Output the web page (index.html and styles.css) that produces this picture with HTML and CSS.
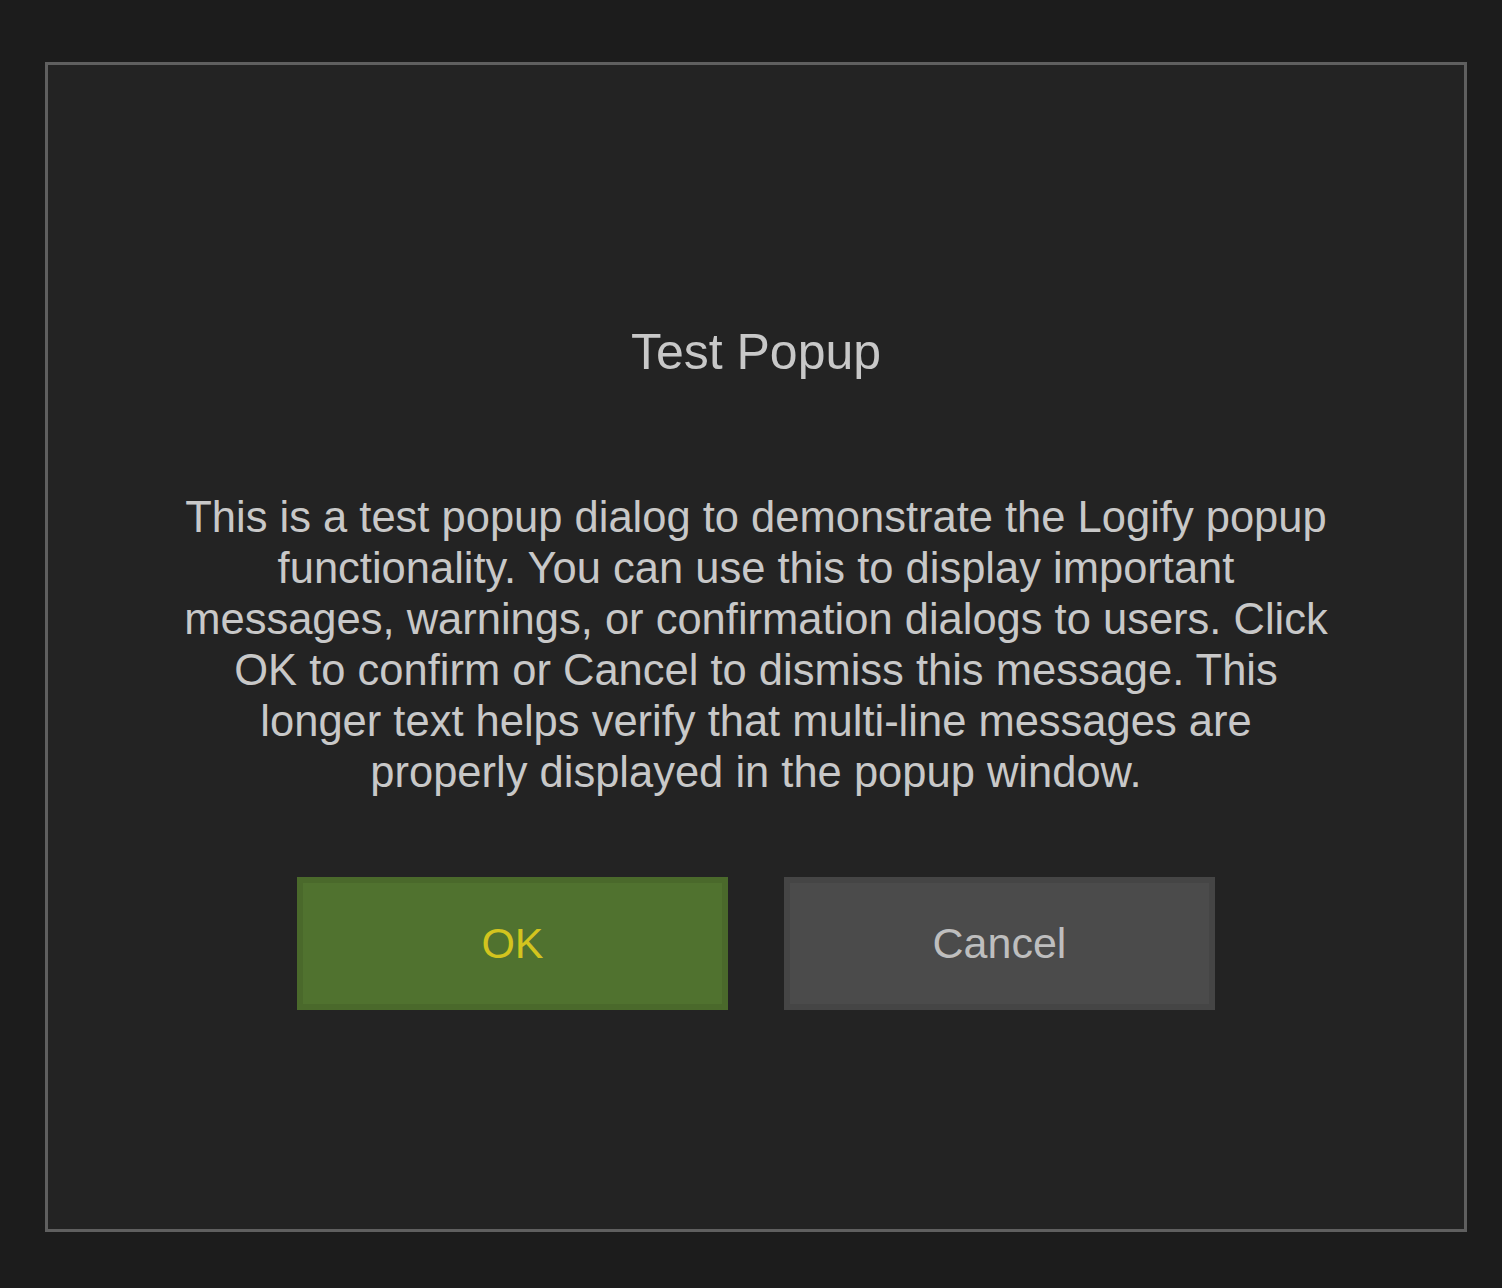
FILE: index.html
```html
<!DOCTYPE html>
<html lang="en">

<head>
    <meta charset="UTF-8">
    <title>Test Popup</title>
    <link rel="stylesheet" href="styles.css">
</head>

<body>
    <div class="popup">
        <h1 class="popup-title">Test Popup</h1>
        <p class="popup-message">This is a test popup dialog to demonstrate the Logify popup functionality. You can use this to display important messages, warnings, or confirmation dialogs to users. Click OK to confirm or Cancel to dismiss this message. This longer text helps verify that multi-line messages are properly displayed in the popup window.</p>
        <div class="popup-buttons">
            <button class="btn btn-ok">OK</button>
            <button class="btn btn-cancel">Cancel</button>
        </div>
    </div>
</body>

</html>
```

FILE: styles.css
```css
body {
    margin: 0;
    background-color: #1c1c1c;
    font-family: "Liberation Sans", Arial, sans-serif;
}

.popup {
    box-sizing: border-box;
    width: 1422px;
    height: 1170px;
    margin: 62px 0 0 45px;
    border: 3px solid #5f5f5f;
    background-color: #232323;
    padding-top: 259px;
    display: flex;
    flex-direction: column;
    align-items: center;
}

.popup-title {
    margin: 0;
    font-size: 50px;
    line-height: 56px;
    font-weight: normal;
    color: #c8c8c8;
}

.popup-message {
    margin: 112px 0 0 0;
    width: 1150px;
    font-size: 43.5px;
    line-height: 51px;
    text-align: center;
    color: #c8c8c8;
}

.popup-buttons {
    display: flex;
    gap: 56px;
    margin-top: 79px;
}

.btn {
    box-sizing: border-box;
    width: 431px;
    height: 133px;
    border: 6px solid rgba(0, 0, 0, 0.07);
    font-family: "Liberation Sans", Arial, sans-serif;
    font-size: 43px;
    padding: 0;
}

.btn-ok {
    background-color: #50722f;
    color: #d3c41e;
}

.btn-cancel {
    background-color: #4b4b4b;
    color: #bebebe;
}
```
